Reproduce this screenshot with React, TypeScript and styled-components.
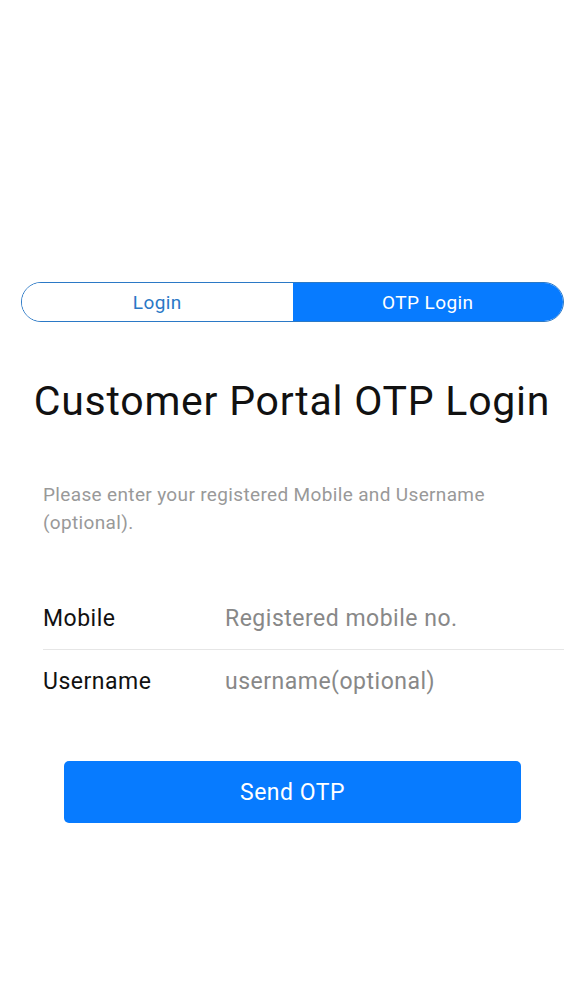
import React from "react";
import styled, { createGlobalStyle } from "styled-components";

const Global = createGlobalStyle`
  html, body { margin: 0; padding: 0; background: #ffffff; }
  body { font-family: Roboto, "Noto Sans", Arial, sans-serif; -webkit-font-smoothing: antialiased; }
  * { box-sizing: border-box; }
`;

const Page = styled.div`
  display: flex;
  flex-direction: column;
  padding-top: 282px;
  min-height: 1000px;
`;

const Segmented = styled.div`
  display: flex;
  margin: 0 20px 0 21px;
  height: 40px;
  border: 1.5px solid #2b79c6;
  border-radius: 20px;
  overflow: hidden;
`;

const Segment = styled.button<{ $active?: boolean }>`
  flex: 1;
  border: none;
  margin: 0;
  padding: 0;
  font-family: inherit;
  font-size: 19px;
  letter-spacing: 0.4px;
  background: ${(p) => (p.$active ? "#077bff" : "#ffffff")};
  color: ${(p) => (p.$active ? "#ffffff" : "#2a78c6")};
  display: flex;
  align-items: center;
  justify-content: center;
`;

const Title = styled.h1`
  margin: 55px 0 0;
  text-align: center;
  font-weight: 400;
  font-size: 41px;
  letter-spacing: 0.75px;
  line-height: 49px;
  color: #111111;
`;

const Hint = styled.p`
  margin: 55px 21px 0 43px;
  font-size: 19px;
  letter-spacing: 0.35px;
  line-height: 28px;
  color: #999999;
`;

const Form = styled.div`
  display: flex;
  flex-direction: column;
  margin: 51px 20px 0 43px;
`;

const Row = styled.label<{ $divider?: boolean }>`
  display: flex;
  align-items: center;
  height: 62px;
  border-bottom: ${(p) => (p.$divider ? "1px solid #e6e6e6" : "none")};
`;

const Label = styled.span`
  width: 182px;
  flex-shrink: 0;
  font-size: 23px;
  letter-spacing: 0.5px;
  color: #111111;
`;

const Input = styled.input`
  flex: 1;
  min-width: 0;
  border: none;
  outline: none;
  padding: 0;
  font-family: inherit;
  font-size: 23px;
  letter-spacing: 0.5px;
  color: #111111;
  background: transparent;
  &::placeholder { color: #888888; }
`;

const SendButton = styled.button`
  margin: 49px 63px 0 64px;
  height: 62px;
  border: none;
  border-radius: 5px;
  background: #077bff;
  color: #ffffff;
  font-family: inherit;
  font-size: 23px;
  letter-spacing: 0.5px;
`;

export default function App() {
  return (
    <>
      <Global />
      <Page>
        <Segmented>
          <Segment>Login</Segment>
          <Segment $active>OTP Login</Segment>
        </Segmented>
        <Title>Customer Portal OTP Login</Title>
        <Hint>Please enter your registered Mobile and Username (optional).</Hint>
        <Form>
          <Row $divider>
            <Label>Mobile</Label>
            <Input placeholder="Registered mobile no." />
          </Row>
          <Row>
            <Label>Username</Label>
            <Input placeholder="username(optional)" />
          </Row>
        </Form>
        <SendButton>Send OTP</SendButton>
      </Page>
    </>
  );
}
